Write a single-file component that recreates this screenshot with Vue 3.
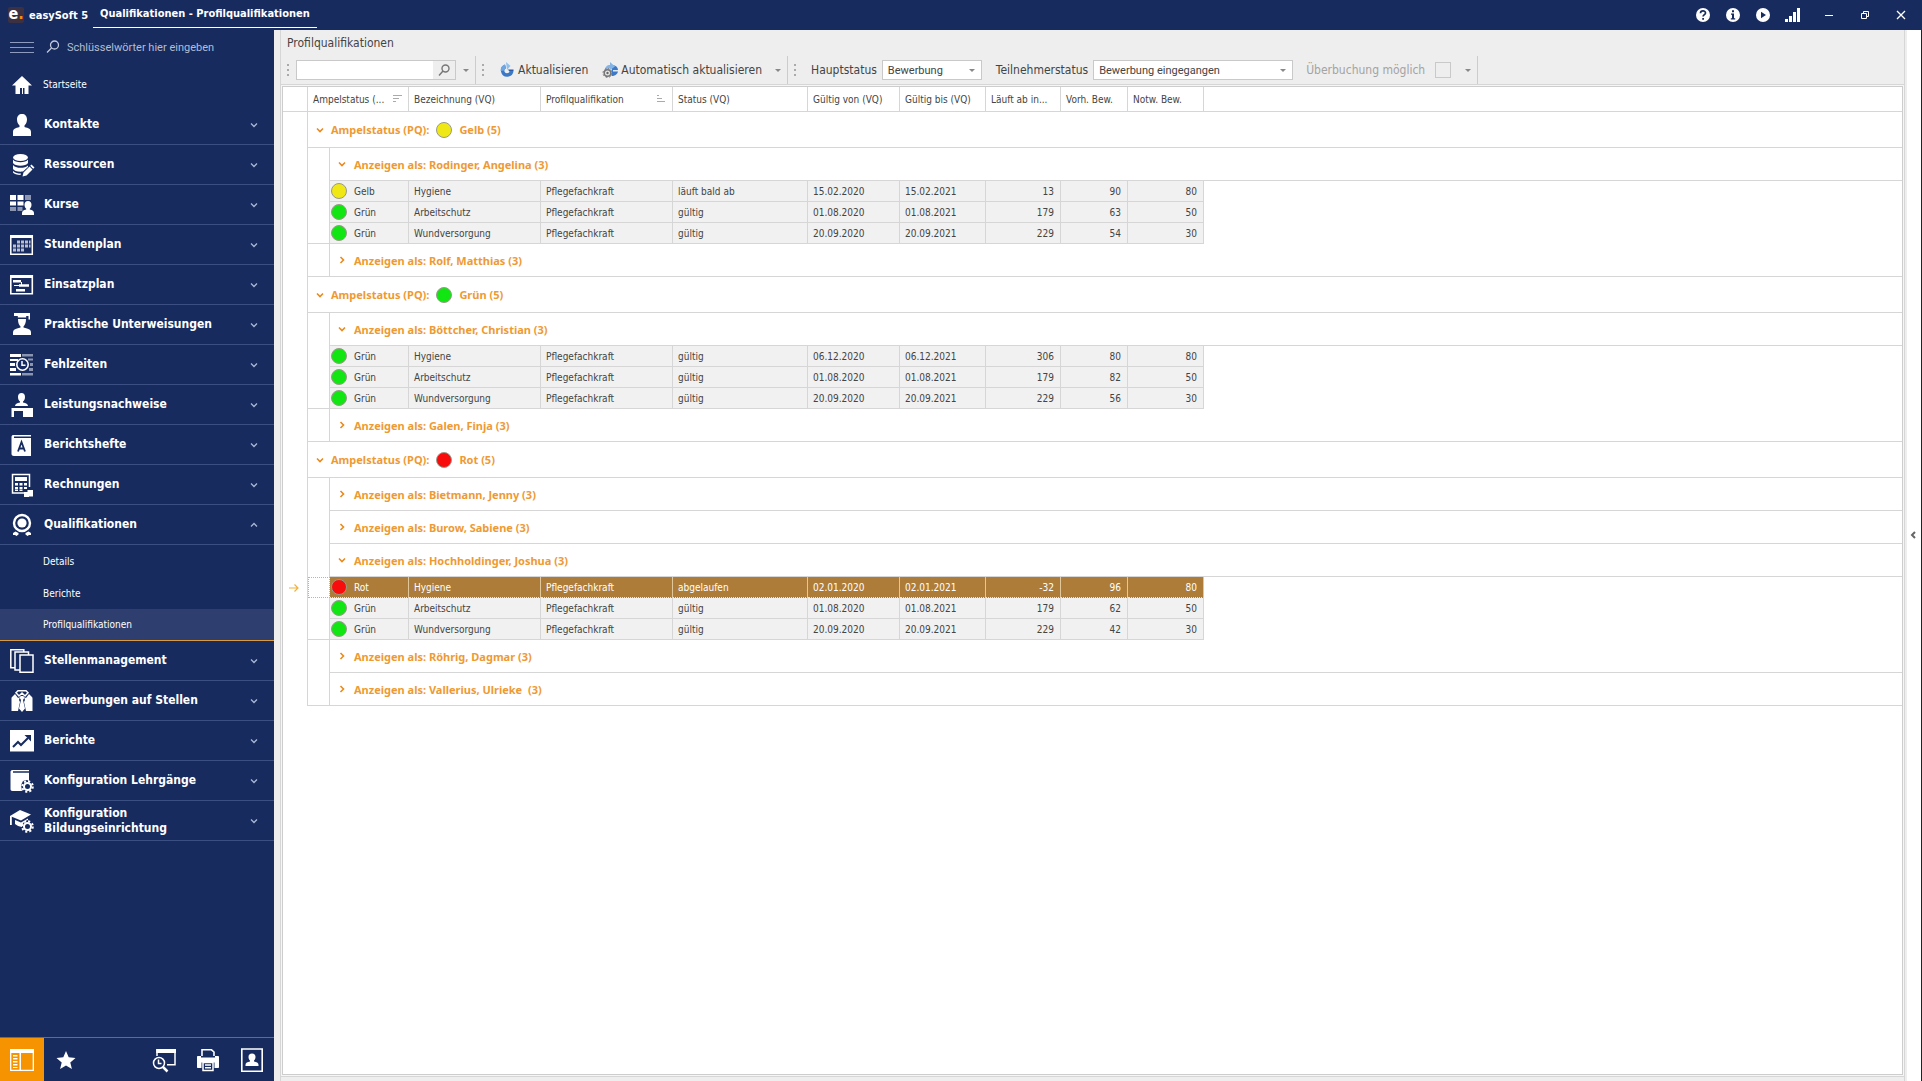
<script setup>
import { ref } from 'vue';

// 24x24 glyphs, drawn in currentColor
const ICONS = {
  home: '<path fill="currentColor" d="M12 3l10 9.500h-3.500V21h-4v-6h-1.500v6h-1v-6h-2v6H5.500v-8.500H2z"/>',
  person: '<path fill="currentColor" d="M12 1c3 0 5 2 5 5.500 0 2.500-1 4.500-2.500 6v1.500c4 1 6.500 2 6.500 5v4H3v-4c0-3 2.500-4 6.500-5v-1.500C8 11 7 9 7 6.500 7 3 9 1 12 1z"/>',
  database: '<g fill="currentColor"><ellipse cx="10.500" cy="4.500" rx="7.500" ry="3.500"/><path d="M3 6.500c2 3.500 13 3.500 15 0V10c-2 3.500-13 3.500-15 0zM3 12c2 3.500 12 3.800 15 .5v1.500l-5 4.500C8 19 4 18 3 16zM3 18c2 2 5 2.500 8 2.500l-.5 1.500C7 22 4 21 3 19.500z"/><path d="M12.500 23.500l1-4 6-6 3 3-6 6zM20.200 12.800l1.300-1.300 3 3-1.300 1.300z"/></g>',
  course: '<g fill="currentColor"><path d="M0 2h6v5H0zM7.500 2h6v5h-6zM0 8.500h6v4H0zM7.500 8.500h6v4h-6z"/><path opacity=".5" d="M15 2h6v5h-6zM0 14h6v4H0zM7.500 14h5v4h-5z"/><path d="M18 8c2.200 0 3.500 1.500 3.500 3.800 0 1.700-.6 3-1.700 4v.8c2.700.7 4.200 1.400 4.200 3.400v2H12v-2c0-2 1.500-2.700 4.200-3.400v-.8c-1.100-1-1.700-2.300-1.700-4C14.500 9.500 15.800 8 18 8z"/></g>',
  calendar: '<path fill="none" stroke="currentColor" stroke-width="1.500" d="M.8 2.800h21.500v18.500H.8z"/><path fill="currentColor" d="M0 2h23v3H0z"/><path fill="currentColor" opacity=".7" d="M7 7.500h3v3H7zM11 7.500h3v3h-3zM15 7.500h3v3h-3zM19 7.500h1.500v3H19zM3 11.500h3v3H3zM7 11.500h3v3H7zM11 11.500h3v3h-3zM15 11.500h3v3h-3zM19 11.500h1.500v3H19zM3 15.500h3v3H3zM7 15.500h3v3H7zM11 15.500h3v3h-3z"/>',
  gantt: '<path fill="none" stroke="currentColor" stroke-width="1.600" d="M.8 2.800h21.500v18H.8z"/><path fill="currentColor" d="M0 2h23v3H0zM3 7h8v2.500H3zM9 11.200h10v2.600H9zM4 12h5v1H4zM6 16h9v2.500H6zM11 9h1v3h-1z"/>',
  teacher: '<g fill="currentColor"><path d="M4 0h16v6.500h-1.500V3h-2.300v1.500H7.800V3H4z"/><path d="M8 6h8c0 4-1.200 6-2.500 7.500v1L17 15.500c3 .7 4 2 4 4V22H3v-2.500c0-2 1-3.300 4-4l3.500-1v-1C9 12 8 10 8 6z"/></g>',
  absence: '<g fill="currentColor"><path d="M0 1h11v3H0zM0 6h8v2H0zM0 10h5v3H0zM0 15h6v3H0zM0 20h11v2.500H0z"/><path opacity=".5" d="M12 1h11v2.500H12zM18 5.500h5v2h-5zM20 10h3v3h-3zM19 15h4v3h-4zM12 20h11v2.500H12z"/></g><circle cx="12.500" cy="11.500" r="5.700" fill="#172b5f" stroke="currentColor" stroke-width="1.600"/><path fill="none" stroke="currentColor" stroke-width="1.500" d="M12 8v4.200h3.500"/>',
  desk: '<g fill="currentColor"><path d="M11.500 0c2.200 0 3.500 1.500 3.500 4 0 2-.8 3.500-2 4.500v1c3 .5 5 1.500 5 3.500H5c0-2 2-3 5-3.500v-1c-1.200-1-2-2.500-2-4.500 0-2.500 1.300-4 3.500-4z"/><path d="M1.500 15H23v9H13v-6H4v6H1.500z"/></g>',
  book: '<path fill="currentColor" d="M3 2h18v1.500H4V5h17v18H4c-1.500 0-2.500-1-2.500-2V4C1.500 3 2 2 3 2z"/><path fill="none" stroke="#172b5f" stroke-width="1.800" d="M8 18.500l3.500-9.500 3.500 9.500M9.300 15.500h4.600"/>',
  calculator: '<path fill="none" stroke="currentColor" stroke-width="1.500" d="M14 20H2.500V1.500h17V14"/><path fill="currentColor" d="M5 4h12v4H5zM5 10h3v2.500H5zM9.500 10h3v2.500h-3zM14 10h3v2.500h-3zM5 14h3v2.500H5zM9.500 14h3v2.500h-3zM5 18h3v-1H5zM9.500 18h3v-1h-3zM14 14h3v2h-3zM17.500 17h5.500v6.500h-4v.5h-5v-5h3.500z"/>',
  badge: '<circle cx="12" cy="10" r="8" fill="none" stroke="currentColor" stroke-width="2.400"/><circle cx="12" cy="10" r="4.600" fill="currentColor"/><path fill="currentColor" d="M5.500 18.500l3 1.500v1.500l-2 1.500-1.500-1H3v-2zM18.500 18.500l-3 1.500v1.500l2 1.500 1.500-1h2v-2z"/>',
  copies: '<g fill="#172b5f" stroke="currentColor" stroke-width="1.500"><path d="M.8.8h13v18H.8z"/><path d="M5 3h13.500v18H5z"/><path d="M10 6h13v17.200H10z"/></g>',
  shirt: '<path fill="currentColor" d="M2 8l3-3 3 4 2-1-1 3 1 2-2 9H1.500V10c0-1 0-1.500.5-2zM22 8l-3-3-3 4-2-1 1 3-1 2 2 9h6.500V10c0-1 0-1.500-.5-2z"/><path fill="none" stroke="currentColor" stroke-width="1.500" d="M8 1.800h8l2 2L15 7l-3-3-3 3-3-3.200z"/><path fill="currentColor" d="M10.500 7h3l.7 2-1.200 2 2 8.500-3 3.500-3-3.500 2-8.500-1.200-2z"/>',
  chart: '<path fill="currentColor" d="M0 1h24v21.500H0z"/><path fill="none" stroke="#172b5f" stroke-width="2" d="M3 18l5-5 3 3 7-7"/><path fill="#172b5f" d="M14.500 6H21v6.500z"/>',
  bookGear: '<path fill="currentColor" d="M2.500 1H19v1.300H3v1.500h16V12l-2-1-4 1-2 4 1 6H2.500C1 22 .5 21 .5 20V3C.5 2 1 1 2.500 1z"/>',
  capGear: '<g fill="currentColor"><path d="M0 7l10-6 11 4.500-10 6z"/><path d="M0 7h1.800v9H0zM5 11l6 2.500 7-4V11c-4 1-6 4-6 7-3-.3-5-1.500-7-3z"/></g>',
  panel: '<path fill="none" stroke="currentColor" stroke-width="1.300" d="M.7 1.700h22.600v20.600H.7z"/><path fill="currentColor" d="M0 1h24v4H0zM9.500 5H11v17H9.500zM3 7h4.500v1.500H3zM3 10h4.500v1.500H3zM3 13h4.500v1.500H3zM3 16h4.500v1.500H3zM3 19h4.500v1H3z"/>',
  star: '<path fill="currentColor" d="M12 3l2.700 6.300 6.800.6-5.200 4.500 1.600 6.600-5.900-3.500L6.100 21l1.600-6.600L2.500 9.900l6.800-.6z"/>',
  preview: '<path fill="none" stroke="currentColor" stroke-width="1.500" d="M5 8V1.800h18v15h-8"/><path fill="currentColor" d="M4.300 1H24v4H4.300z"/><circle cx="7" cy="15" r="5.500" fill="none" stroke="currentColor" stroke-width="1.500"/><path fill="none" stroke="currentColor" stroke-width="1.500" d="M6.500 11.500v4H9.500"/><path stroke="currentColor" stroke-width="2.500" d="M11 19l4.500 4.500"/>',
  printer: '<path fill="none" stroke="currentColor" stroke-width="1.600" d="M6 8V1.800h9.500L18 4v4"/><path fill="currentColor" d="M2 8h3v1.500h14V8h3c.6 0 1 .5 1 1v10c0 .5-.3 1-1 1h-3.500v-5.500h-13V20H2c-.7 0-1-.5-1-1V9c0-.5.3-1 1-1z"/><path fill="none" stroke="currentColor" stroke-width="1.500" d="M7 14.500h10v8H7zM9 17h6M9 19.800h6"/>',
  contact: '<path fill="none" stroke="currentColor" stroke-width="1.600" d="M1.800 1h20.400v22.200H1.800z"/><path fill="currentColor" d="M12 5.500c2.300 0 3.500 1.500 3.500 3.500 0 1.700-.7 2.800-1.500 3.500v1c2.500.5 4.500 1.200 4.500 3.200V18h-13v-1.300c0-2 2-2.700 4.500-3.200v-1C9.200 11.800 8.500 10.700 8.500 9c0-2 1.200-3.500 3.500-3.500z"/>',
};
const GEAR = '<g fill="none" stroke="currentColor"><circle cx="17.500" cy="17.500" r="3.500" stroke-width="2"/><circle cx="17.500" cy="17.500" r="5.300" stroke-width="2" stroke-dasharray="2.100 2.060"/></g>';
ICONS.bookGear += GEAR;
ICONS.capGear += GEAR;

const menu = [
  { label: 'Kontakte', icon: 'person' },
  { label: 'Ressourcen', icon: 'database' },
  { label: 'Kurse', icon: 'course' },
  { label: 'Stundenplan', icon: 'calendar' },
  { label: 'Einsatzplan', icon: 'gantt' },
  { label: 'Praktische Unterweisungen', icon: 'teacher' },
  { label: 'Fehlzeiten', icon: 'absence' },
  { label: 'Leistungsnachweise', icon: 'desk' },
  { label: 'Berichtshefte', icon: 'book' },
  { label: 'Rechnungen', icon: 'calculator' },
  { label: 'Qualifikationen', icon: 'badge', children: ['Details', 'Berichte', 'Profilqualifikationen'] },
  { label: 'Stellenmanagement', icon: 'copies' },
  { label: 'Bewerbungen auf Stellen', icon: 'shirt' },
  { label: 'Berichte', icon: 'chart' },
  { label: 'Konfiguration Lehrgänge', icon: 'bookGear' },
  { label: 'Konfiguration Bildungseinrichtung', icon: 'capGear' },
];
const openMenu = ref('Qualifikationen');
const activeChild = ref('Profilqualifikationen');

const columns = [
  { label: 'Bezeichnung (VQ)' },
  { label: 'Profilqualifikation', sort: 'asc' },
  { label: 'Status (VQ)' },
  { label: 'Gültig von (VQ)' },
  { label: 'Gültig bis (VQ)' },
  { label: 'Läuft ab in...' },
  { label: 'Vorh. Bew.' },
  { label: 'Notw. Bew.' },
];

const PQ = 'Pflegefachkraft';
const groups = ref([
  {
    color: 'Gelb',
    count: 5,
    open: true,
    people: [
      {
        name: 'Rodinger, Angelina',
        open: true,
        rows: [
          ['Gelb', 'Hygiene', PQ, 'läuft bald ab', '15.02.2020', '15.02.2021', 13, 90, 80],
          ['Grün', 'Arbeitschutz', PQ, 'gültig', '01.08.2020', '01.08.2021', 179, 63, 50],
          ['Grün', 'Wundversorgung', PQ, 'gültig', '20.09.2020', '20.09.2021', 229, 54, 30],
        ],
      },
      { name: 'Rolf, Matthias', open: false, rows: [] },
    ],
  },
  {
    color: 'Grün',
    count: 5,
    open: true,
    people: [
      {
        name: 'Böttcher, Christian',
        open: true,
        rows: [
          ['Grün', 'Hygiene', PQ, 'gültig', '06.12.2020', '06.12.2021', 306, 80, 80],
          ['Grün', 'Arbeitschutz', PQ, 'gültig', '01.08.2020', '01.08.2021', 179, 82, 50],
          ['Grün', 'Wundversorgung', PQ, 'gültig', '20.09.2020', '20.09.2021', 229, 56, 30],
        ],
      },
      { name: 'Galen, Finja', open: false, rows: [] },
    ],
  },
  {
    color: 'Rot',
    count: 5,
    open: true,
    people: [
      { name: 'Bietmann, Jenny', open: false, rows: [] },
      { name: 'Burow, Sabiene', open: false, rows: [] },
      {
        name: 'Hochholdinger, Joshua',
        open: true,
        rows: [
          ['Rot', 'Hygiene', PQ, 'abgelaufen', '02.01.2020', '02.01.2021', -32, 96, 80],
          ['Grün', 'Arbeitschutz', PQ, 'gültig', '01.08.2020', '01.08.2021', 179, 62, 50],
          ['Grün', 'Wundversorgung', PQ, 'gültig', '20.09.2020', '20.09.2021', 229, 42, 30],
        ],
      },
      { name: 'Röhrig, Dagmar', open: false, rows: [] },
      { name: 'Vallerius, Ulrieke ', open: false, rows: [] },
    ],
  },
]);
const selected = ref(groups.value[2].people[2].rows[0]);

const lampClass = { Gelb: 'yellow', Grün: 'green', Rot: 'red' };

function toggleMenu(item) {
  openMenu.value = openMenu.value === item.label ? '' : item.label;
}
</script>

<template>
  <div class="app">
    <header class="titlebar">
      <span class="logo">e<i>.</i></span>
      <span class="brand">easySoft 5</span>
      <h1 class="crumb">Qualifikationen - Profilqualifikationen</h1>
      <div class="sys">
        <button aria-label="Hilfe">
          <svg viewBox="0 0 16 16"><circle cx="8" cy="8" r="7" fill="#fff" /><path d="M5.500 6.200c0-3 5-3 5-.2 0 1.700-2.400 1.700-2.400 3.600" fill="none" stroke="#172b5f" stroke-width="1.700" /><path d="M7.200 11h1.800v1.800H7.200z" fill="#172b5f" /></svg>
        </button>
        <button aria-label="Info">
          <svg viewBox="0 0 16 16"><circle cx="8" cy="8" r="7" fill="#fff" /><path d="M7 3.200h2v2H7zM6 6.500h3v4.700h1.200v1.300H5.800v-1.300H7V7.800H6z" fill="#172b5f" /></svg>
        </button>
        <button aria-label="Start">
          <svg viewBox="0 0 16 16"><circle cx="8" cy="8" r="7" fill="#fff" /><path d="M6 4.800L11 8l-5 3.200z" fill="#172b5f" /></svg>
        </button>
        <button aria-label="Verbindung">
          <svg viewBox="0 0 16 16"><path d="M0 12h3v3H0zM4 9h3v6H4zM8 5h3v10H8zM12 1h3v14h-3z" fill="#fff" /></svg>
        </button>
        <button class="win" aria-label="Minimieren">
          <svg viewBox="0 0 16 16"><path d="M4 8.500h8" stroke="#fff" /></svg>
        </button>
        <button class="win" aria-label="Wiederherstellen">
          <svg viewBox="0 0 16 16"><path d="M4.500 6.500h5v5h-5zM6.500 6V4.500h5v5H10" fill="none" stroke="#fff" /></svg>
        </button>
        <button class="win" aria-label="Schließen">
          <svg viewBox="0 0 16 16"><path d="M4 4l8 8M12 4l-8 8" stroke="#fff" stroke-width="1.300" /></svg>
        </button>
      </div>
    </header>

    <div class="body">
      <aside class="sidebar">
        <div class="side-search">
          <button class="burger" aria-label="Menü"><span></span><span></span><span></span></button>
          <svg class="lens" viewBox="0 0 14 14"><circle cx="8.500" cy="5" r="4" /><path d="M5.500 8L1 12.500" /></svg>
          <input type="text" aria-label="Suche" placeholder="Schlüsselwörter hier eingeben" />
        </div>
        <a class="start" href="#">
          <svg class="icon" viewBox="0 0 24 24" v-html="ICONS.home"></svg>
          <span>Startseite</span>
        </a>
        <nav class="menu">
          <template v-for="item in menu" :key="item.label">
            <button class="menu-item" :class="{ open: openMenu === item.label }" @click="toggleMenu(item)">
              <svg class="icon" viewBox="0 0 24 24" v-html="ICONS[item.icon]"></svg>
              <span class="menu-label">{{ item.label }}</span>
              <svg class="caret" viewBox="0 0 8 8"><path d="M1 2.500l3 3 3-3" /></svg>
            </button>
            <div v-if="item.children && openMenu === item.label" class="submenu">
              <a
                v-for="child in item.children"
                :key="child"
                href="#"
                :class="{ active: child === activeChild }"
                @click.prevent="activeChild = child"
              >{{ child }}</a>
            </div>
          </template>
        </nav>
        <div class="dock">
          <button class="dock-active" aria-label="Navigation"><svg class="icon" viewBox="0 0 24 24" v-html="ICONS.panel"></svg></button>
          <button aria-label="Favoriten"><svg class="icon" viewBox="0 0 24 24" v-html="ICONS.star"></svg></button>
          <span class="spacer"></span>
          <button aria-label="Vorschau"><svg class="icon" viewBox="0 0 24 24" v-html="ICONS.preview"></svg></button>
          <button aria-label="Drucken"><svg class="icon" viewBox="0 0 24 24" v-html="ICONS.printer"></svg></button>
          <button aria-label="Benutzer"><svg class="icon" viewBox="0 0 24 24" v-html="ICONS.contact"></svg></button>
        </div>
      </aside>

      <main class="main">
        <h2 class="title">Profilqualifikationen</h2>
        <div class="toolbar">
          <div class="tool-group">
            <span class="grip"></span>
            <div class="find">
              <input type="text" aria-label="Suchen" />
              <button aria-label="Suchen"><svg viewBox="0 0 14 14"><circle cx="8.500" cy="5.500" r="3.500" /><path d="M6 8l-4 4.500" /></svg></button>
            </div>
            <button class="drop" aria-label="Suchoptionen"><span class="tri"></span></button>
          </div>
          <div class="tool-group actions">
            <span class="grip"></span>
            <button class="action">
              <svg viewBox="0 0 16 16"><path d="M6 2.500A6.300 6.300 0 1 0 14.500 9H10.500A2.600 2.600 0 1 1 7 6.300z" fill="#3c78c8" /><path d="M6 2.500A6.300 6.300 0 0 0 1.700 9l3.700-.5A2.600 2.600 0 0 1 7 6.300z" fill="#6fa6e2" /><path d="M7 0l4.500 4L8 8z" fill="#8fc0ee" /><path d="M9 7.500h5.500V9H10z" fill="#2a5ba8" /></svg>
              Aktualisieren
            </button>
            <button class="action">
              <svg viewBox="0 0 16 16"><path d="M10 3a5.500 5.500 0 0 1 6 6c-.4 3.500-3 5-6.500 5z" fill="#3c78c8" /><path d="M3 8c0-3 2-5 5-5V0l5 4.500L8 8V6C6 6 5 7 5 8z" fill="#84b4e6" /><path d="M11 8h5v1.500h-5z" fill="#dce9f7" /><circle cx="5.500" cy="11" r="3.300" fill="#e8e8e8" stroke="#777" stroke-width="1.600" /><circle cx="5.500" cy="11" r="4.500" fill="none" stroke="#777" stroke-width="1" stroke-dasharray="1.700 1.830" /><circle cx="5.500" cy="11" r="1.200" fill="#666" /></svg>
              Automatisch aktualisieren
            </button>
            <button class="drop" aria-label="Intervall"><span class="tri"></span></button>
          </div>
          <div class="tool-group filters">
            <span class="grip"></span>
            <label for="haupt">Hauptstatus</label>
            <span class="select narrow">
              <select id="haupt"><option>Bewerbung</option></select>
              <span class="tri"></span>
            </span>
            <label for="teiln">Teilnehmerstatus</label>
            <span class="select wide">
              <select id="teiln"><option>Bewerbung eingegangen</option></select>
              <span class="tri"></span>
            </span>
            <label class="off" for="ueber">Überbuchung möglich</label>
            <input id="ueber" type="checkbox" disabled />
            <button class="drop" aria-label="Weitere Filter"><span class="tri"></span></button>
          </div>
        </div>

        <div class="frame">
          <div class="grid-box">
            <table>
              <colgroup>
                <col class="c-mark" /><col class="c-indent" /><col class="c-lamp" /><col class="c-name" /><col class="c-pq" />
                <col class="c-status" /><col class="c-from" /><col class="c-to" /><col class="c-days" /><col class="c-have" />
                <col class="c-need" /><col />
              </colgroup>
              <thead>
                <tr>
                  <th></th>
                  <th colspan="2">
                    <div class="head">
                      Ampelstatus (...
                      <svg viewBox="0 0 10 8"><path d="M1 .5h9M1 3.500h6M1 6.500h3" /></svg>
                    </div>
                  </th>
                  <th v-for="col in columns" :key="col.label">
                    <div class="head">
                      {{ col.label }}
                      <svg v-if="col.sort" viewBox="0 0 10 8"><path d="M1 .5h2M1 3.500h5M1 6.500h8" /></svg>
                    </div>
                  </th>
                  <th class="rest"></th>
                </tr>
              </thead>
              <tbody v-for="group in groups" :key="group.color">
                <tr class="group">
                  <td class="mark"></td>
                  <td colspan="11">
                    <button @click="group.open = !group.open">
                      <svg class="chev" :class="{ closed: !group.open }" viewBox="0 0 8 8"><path d="M1 2.500l3 3 3-3" /></svg>
                      Ampelstatus (PQ):
                      <span class="lamp" :class="lampClass[group.color]"></span>
                      {{ group.color }} ({{ group.count }})
                    </button>
                  </td>
                </tr>
                <template v-if="group.open">
                  <template v-for="(person, pi) in group.people" :key="person.name">
                    <tr class="person">
                      <td class="mark"></td>
                      <td class="indent" :class="{ end: pi === group.people.length - 1 }"></td>
                      <td colspan="10">
                        <button @click="person.open = !person.open">
                          <svg class="chev" :class="{ closed: !person.open }" viewBox="0 0 8 8"><path d="M1 2.500l3 3 3-3" /></svg>
                          <span class="who">Anzeigen als: {{ person.name }} (3)</span>
                        </button>
                      </td>
                    </tr>
                    <template v-if="person.open">
                      <tr
                        v-for="(row, ri) in person.rows"
                        :key="ri"
                        class="data"
                        :class="{ selected: row === selected }"
                        @click="selected = row"
                      >
                        <td class="mark">
                          <svg v-if="row === selected" viewBox="0 0 10 8"><path d="M0 4h9M5.500 .5L9 4 5.500 7.500" /></svg>
                        </td>
                        <td class="indent" :class="{ end: ri === person.rows.length - 1 }"></td>
                        <td class="state"><div><span class="lamp" :class="lampClass[row[0]]"></span>{{ row[0] }}</div></td>
                        <td v-for="n in 8" :key="n" class="cell" :class="{ num: n > 5 }">{{ row[n] }}</td>
                        <td class="rest"></td>
                      </tr>
                    </template>
                  </template>
                </template>
              </tbody>
            </table>
          </div>
        </div>
      </main>

      <button class="flyout" aria-label="Bereich einblenden">
        <svg viewBox="0 0 6 8"><path d="M5 1L2 4l3 3" /></svg>
      </button>
    </div>
  </div>
</template>

<style>
body {
  margin: 0;
}
</style>

<style scoped>
.app {
  --navy: #172b5f;
  --line: #d6d6d6;
  --orange: #ee9a33;
  display: flex;
  flex-direction: column;
  min-height: 100vh;
  font-family: "DejaVu Sans Condensed", "Noto Sans", Tahoma, sans-serif;
  font-size: 10px;
  color: #444;
  background: #eee;
}
.app *,
.app *::before {
  box-sizing: border-box;
}
button,
input,
select {
  font: inherit;
  color: inherit;
  margin: 0;
  padding: 0;
  border: 0;
  background: none;
}
svg {
  display: block;
  flex: none;
}

/* title bar */
.titlebar {
  display: flex;
  align-items: center;
  height: 30px;
  padding: 0 13px 0 8px;
  background: var(--navy);
  color: #fff;
  font-size: 11px;
  font-weight: bold;
}
.logo {
  width: 16px;
  height: 16px;
  margin-right: 5px;
  border-radius: 2px;
  background: #3b3143;
  font-size: 16px;
  line-height: 13px;
  text-align: center;
}
.logo i {
  color: #f39200;
  font-style: normal;
}
.crumb {
  height: 22px;
  margin: 4px 0 0 5px;
  padding: 0 7px;
  border-bottom: 1px solid #fff;
  font-size: 11px;
  line-height: 16px;
}
.sys {
  display: flex;
  align-items: center;
  gap: 14px;
  margin-left: auto;
}
.sys svg {
  width: 16px;
  height: 16px;
}
.sys .win {
  margin-left: 6px;
}

.body {
  display: flex;
  flex: 1;
}

/* sidebar */
.sidebar {
  display: flex;
  flex-direction: column;
  flex: none;
  width: 274px;
  background: var(--navy);
  color: #fff;
}
.side-search {
  display: flex;
  align-items: center;
  height: 34px;
  padding-left: 10px;
}
.burger {
  display: flex;
  flex-direction: column;
  gap: 4px;
  width: 24px;
  margin-right: 12px;
}
.burger span {
  height: 1px;
  background: #8e9bbd;
}
.lens {
  width: 14px;
  height: 14px;
  margin-right: 7px;
  fill: none;
  stroke: #c3cbdd;
  stroke-width: 1.3;
}
.side-search input {
  flex: 1;
  min-width: 0;
  font-family: Roboto, sans-serif;
  font-size: 11px;
}
.side-search input::placeholder {
  color: #b3bdd3;
  opacity: 1;
}
.start {
  display: flex;
  align-items: center;
  gap: 9px;
  height: 41px;
  padding-left: 10px;
  color: #fff;
  font-size: 10px;
  text-decoration: none;
}
.icon {
  width: 24px;
  height: 24px;
  overflow: visible;
}
.menu {
  display: flex;
  flex-direction: column;
}
.menu-item {
  display: flex;
  align-items: center;
  gap: 10px;
  height: 40px;
  padding: 0 16px 0 10px;
  border-bottom: 1px solid #3b4f82;
  font-size: 12px;
  font-weight: bold;
  line-height: 15px;
  text-align: left;
}
.menu-label {
  flex: 1;
  padding-right: 24px;
}
.caret {
  width: 8px;
  height: 8px;
  fill: none;
  stroke: #a9b6d4;
  stroke-width: 1.3;
}
.open .caret {
  transform: rotate(180deg);
}
.submenu a {
  display: flex;
  align-items: center;
  height: 32px;
  padding-left: 43px;
  color: #fff;
  font-size: 10px;
  text-decoration: none;
}
.submenu .active {
  background: #2e3f6f;
  border-bottom: 1px solid #d99b3d;
}
.dock {
  display: flex;
  height: 44px;
  margin-top: auto;
  border-top: 1px solid #5d6c93;
}
.dock button {
  display: flex;
  align-items: center;
  justify-content: center;
  width: 44px;
}
.dock .dock-active {
  background: #f59300;
}
.spacer {
  flex: 1;
}

/* main area */
.main {
  display: flex;
  flex-direction: column;
  flex: 1;
  min-width: 0;
  margin-left: 6px;
  border-left: 1px solid var(--line);
  border-right: 1px solid var(--line);
}
.title {
  margin: 0;
  padding-left: 6px;
  font-size: 12px;
  font-weight: normal;
  line-height: 26px;
}
.toolbar {
  display: flex;
  height: 28px;
  font-size: 12px;
}
.tool-group {
  display: flex;
  align-items: center;
  border-right: 1px solid #ccc;
}
.grip {
  width: 2px;
  height: 12px;
  margin: 0 7px 0 6px;
  background: repeating-linear-gradient(#aaa 0 2px, transparent 2px 5px);
}
.find {
  display: flex;
  width: 160px;
  height: 20px;
  border: 1px solid #c9c9c9;
  background: #fff;
}
.find input {
  flex: 1;
  min-width: 0;
}
.find button {
  display: flex;
  align-items: center;
  justify-content: center;
  width: 22px;
  background: #eee;
}
.find svg {
  width: 14px;
  height: 14px;
  fill: none;
  stroke: #777;
  stroke-width: 1.4;
}
.drop {
  width: 19px;
  height: 20px;
}
.tri {
  display: block;
  width: 0;
  margin: 0 auto;
  border: 3px solid transparent;
  border-top-color: #888;
  border-bottom: 0;
}
.action {
  display: flex;
  align-items: center;
  gap: 3px;
  margin: 0 6px 0 8px;
}
.action svg {
  width: 16px;
  height: 16px;
}
.filters label {
  margin: 0 5px 0 8px;
}
.filters .off {
  margin: 0 10px 0 13px;
  color: #a3a3a3;
}
.select + label {
  margin-left: 14px;
}
.select {
  display: flex;
  align-items: center;
  height: 20px;
  border: 1px solid #c9c9c9;
  background: #fff;
  font-family: Roboto, sans-serif;
  font-size: 11px;
}
.select .tri {
  margin: 0 6px 0 -12px;
  pointer-events: none;
}
.select select {
  flex: 1;
  height: 18px;
  padding-left: 5px;
  appearance: none;
}
.narrow {
  width: 100px;
}
.wide {
  width: 200px;
}
.filters input {
  width: 16px;
  height: 16px;
  margin-right: 7px;
  border: 1px solid #c9c9c9;
  appearance: none;
}

/* grid */
.frame {
  flex: 1;
  display: flex;
  padding: 1px;
  margin-bottom: 4px;
  border: 1px solid var(--line);
  border-left: 0;
  border-right: 0;
  background: #f6f6f6;
}
.grid-box {
  flex: 1;
  border: 1px solid #cdcdcd;
  background: #fff;
}
table {
  width: 100%;
  table-layout: fixed;
  border-collapse: separate;
  border-spacing: 0;
}
.c-mark { width: 25px; }
.c-indent { width: 22px; }
.c-lamp { width: 79px; }
.c-name { width: 132px; }
.c-pq { width: 132px; }
.c-status { width: 135px; }
.c-from { width: 92px; }
.c-to { width: 86px; }
.c-days { width: 75px; }
.c-have { width: 67px; }
.c-need { width: 76px; }
th,
td {
  padding: 0;
  border: 0 solid var(--line);
  font-weight: normal;
  text-align: left;
  white-space: nowrap;
}
th {
  height: 25px;
  border-width: 0 1px 1px 0;
}
th.rest {
  border-right: 0;
}
.head {
  display: flex;
  align-items: center;
  justify-content: space-between;
  padding: 0 6px 0 5px;
}
.head svg {
  width: 10px;
  height: 8px;
  stroke: #aaa;
}
.mark {
  border-right-width: 1px;
}
.mark svg {
  width: 10px;
  height: 8px;
  margin-left: 6px;
  fill: none;
  stroke: #f0b23c;
  stroke-width: 1.2;
}
.group td {
  height: 36px;
  border-bottom-width: 1px;
}
.person td {
  height: 33px;
  border-bottom-width: 1px;
}
.group .mark,
.person .mark {
  border-bottom-width: 0;
}
.indent,
.person .indent {
  border-width: 0 1px 0 0;
}
.indent.end {
  border-bottom-width: 1px;
}
.group button,
.person button {
  display: flex;
  align-items: center;
  color: var(--orange);
  font-family: "Noto Sans", sans-serif;
  font-size: 11px;
  font-weight: bold;
}
.group button {
  gap: 7px;
  padding-left: 8px;
}
.person button {
  gap: 8px;
  padding-left: 8px;
}
.who {
  white-space: pre;
}
.chev {
  width: 8px;
  height: 8px;
  fill: none;
  stroke: #ea8a1c;
  stroke-width: 1.6;
}
.chev.closed {
  transform: rotate(-90deg);
}
.lamp {
  flex: none;
  width: 16px;
  height: 16px;
  border: 1px solid #9a9a8a;
  border-radius: 50%;
}
.yellow {
  background: #f0e814;
}
.green {
  background: #12e612;
}
.red {
  background: #f80c0c;
}
.data td {
  height: 21px;
}
.data .state,
.data .cell {
  border-width: 0 1px 1px 0;
  background: #f1f1f1;
}
.data .cell {
  padding: 0 6px 0 5px;
}
.data .num {
  text-align: right;
}
.state div {
  display: flex;
  align-items: center;
  gap: 7px;
  padding-left: 1px;
}
.selected .state,
.selected .cell {
  border-right-color: #e2c79a;
  border-bottom: 1px dotted #ffe2b0;
  background: #ad7c38;
  color: #fff;
}
.data.selected .indent {
  border: 1px dotted #e9b04a;
}
.flyout {
  align-self: stretch;
  width: 15px;
  margin-left: 2px;
  padding: 0 0 42px 3px;
  border-right: 1px solid #222;
  background: #fff;
}
.flyout svg {
  width: 6px;
  height: 8px;
  fill: none;
  stroke: #666;
  stroke-width: 2;
}
</style>
